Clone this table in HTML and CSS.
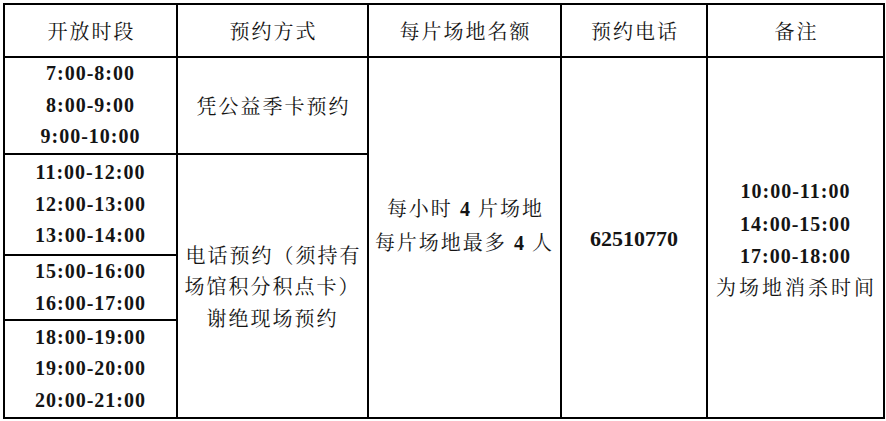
FILE: index.html
```html
<!DOCTYPE html>
<html lang="zh-CN">
<head>
<meta charset="utf-8">
<link rel="stylesheet" href="styles.css">
</head>
<body>
<table class="sched">
  <colgroup>
    <col class="c1"><col class="c2"><col class="c3"><col class="c4"><col class="c5">
  </colgroup>
  <tr class="r0">
    <th>开放时段</th>
    <th>预约方式</th>
    <th>每片场地名额</th>
    <th>预约电话</th>
    <th>备注</th>
  </tr>
  <tr class="r1">
    <td class="num">7:00-8:00<br>8:00-9:00<br>9:00-10:00</td>
    <td class="zh">凭公益季卡预约</td>
    <td rowspan="4" class="zh quota">每小时 <span class="n">4</span> 片场地<br>每片场地最多 <span class="n">4</span> 人</td>
    <td rowspan="4" class="num phone">62510770</td>
    <td rowspan="4" class="note"><span class="n">10:00-11:00<br>14:00-15:00<br>17:00-18:00</span><br><span class="zh">为场地消杀时间</span></td>
  </tr>
  <tr class="r2">
    <td class="num">11:00-12:00<br>12:00-13:00<br>13:00-14:00</td>
    <td rowspan="3" class="zh">电话预约（须持有<br>场馆积分积点卡）<br>谢绝现场预约</td>
  </tr>
  <tr class="r3">
    <td class="num">15:00-16:00<br>16:00-17:00</td>
  </tr>
  <tr class="r4">
    <td class="num">18:00-19:00<br>19:00-20:00<br>20:00-21:00</td>
  </tr>
</table>
</body>
</html>
```

FILE: styles.css
```css
html, body {
  margin: 0;
  padding: 0;
  background: #ffffff;
}
body {
  width: 886px;
  height: 421px;
  overflow: hidden;
}
.sched {
  border-collapse: collapse;
  table-layout: fixed;
  width: 880px;
  margin: 3px 0 0 3px;
  color: #141414;
}
.c1 { width: 173px; }
.c2 { width: 191px; }
.c3 { width: 193px; }
.c4 { width: 146px; }
.c5 { width: 177px; }
.sched th, .sched td {
  border: 2px solid #000;
  padding: 0;
  text-align: center;
  vertical-align: middle;
  line-height: 31.5px;
}
.sched th {
  font-family: "Noto Serif CJK SC", "Noto Sans CJK SC", sans-serif;
  font-weight: normal;
  font-size: 20px;
  letter-spacing: 2px;
  text-indent: 2px;
}
.r0 { height: 53px; }
.r1 { height: 97px; }
.r2 { height: 101px; }
.r3 { height: 65px; }
.r4 { height: 98px; }
.num, .n {
  font-family: "Liberation Serif", "Times New Roman", serif;
  font-weight: bold;
  font-size: 20px;
  letter-spacing: 1px;
}
.zh {
  font-family: "Noto Serif CJK SC", "Noto Sans CJK SC", sans-serif;
  font-size: 20px;
  letter-spacing: 2px;
  text-indent: 2px;
}
.sched td.quota {
  padding-bottom: 24px;
}
.sched td.phone {
  font-size: 22px;
  letter-spacing: 0;
  padding-top: 2px;
}
.sched td.note {
  padding-top: 6px;
  line-height: 31.5px;
}
.note .zh {
  letter-spacing: 3px;
  display: inline-block;
  line-height: 26px;
}
```
